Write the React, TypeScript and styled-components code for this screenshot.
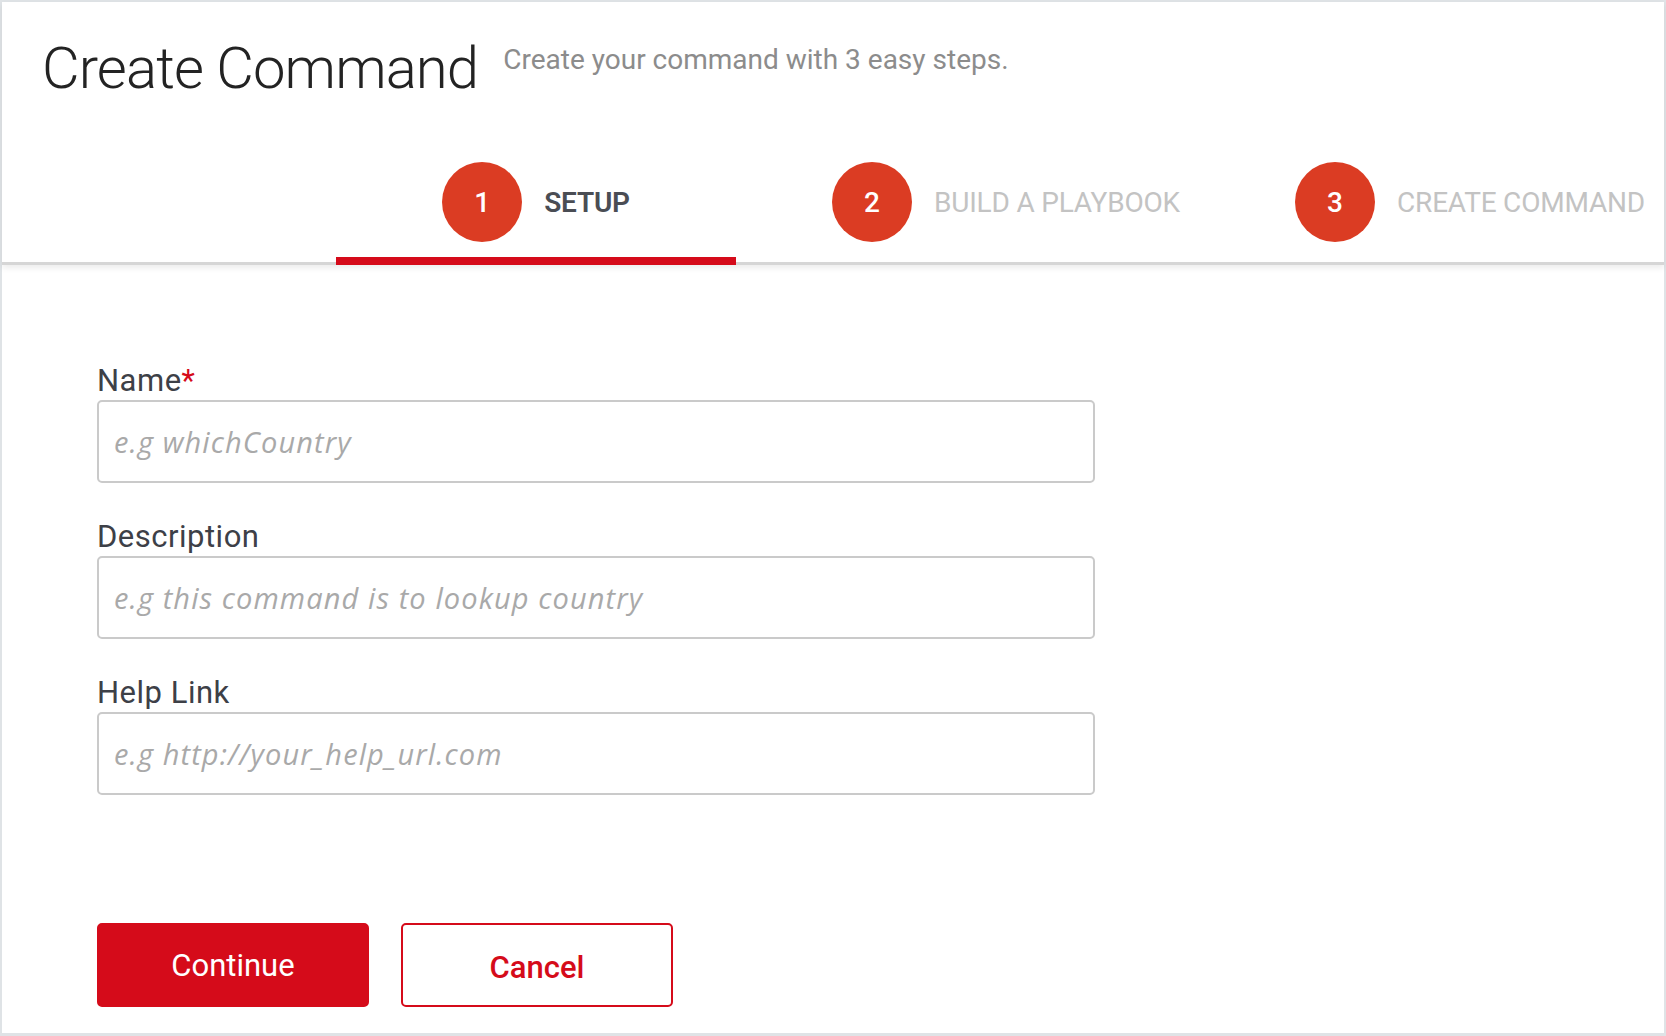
import React from "react";
import styled, { createGlobalStyle } from "styled-components";

const Global = createGlobalStyle`
  html, body { margin: 0; padding: 0; background: #ffffff; }
  body { font-family: Roboto, "Liberation Sans", sans-serif; }
  * { box-sizing: border-box; }
`;

const Card = styled.div`
  width: 1666px;
  height: 1036px;
  border: 2px solid #dfe3e6;
  border-bottom-width: 3px;
  background: #fff;
  display: flex;
  flex-direction: column;
`;

const Header = styled.header`
  padding-top: 37px;
  border-bottom: 3px solid #d6d6d6;
  box-shadow: 0 3px 6px rgba(0, 0, 0, 0.08);
  position: relative;
  z-index: 1;
`;

const TitleRow = styled.div`
  display: flex;
  align-items: flex-start;
  gap: 25px;
  padding-left: 40px;
`;

const Title = styled.h1`
  margin: 0;
  font-size: 58px;
  line-height: 58px;
  font-weight: 300;
  color: #232323;
  letter-spacing: -0.9px;
`;

const Subtitle = styled.p`
  margin: 7px 0 0;
  font-size: 28px;
  line-height: 28px;
  color: #8c8c8c;
`;

const Steps = styled.nav`
  display: grid;
  grid-template-columns: 400px 540px 1fr;
  margin-top: 65px;
  margin-bottom: -3px;
  padding-left: 334px;
`;

const Step = styled.div<{ $active?: boolean }>`
  display: flex;
  align-items: center;
  justify-content: center;
  gap: 22px;
  padding-bottom: 15px;
  border-bottom: 8px solid ${(p) => (p.$active ? "#d50b1a" : "transparent")};
`;

const Circle = styled.span`
  width: 80px;
  height: 80px;
  border-radius: 50%;
  background: #db3c23;
  color: #fff;
  font-size: 28px;
  font-weight: 500;
  display: flex;
  align-items: center;
  justify-content: center;
`;

const StepLabel = styled.span<{ $active?: boolean }>`
  font-size: 28px;
  text-transform: uppercase;
  letter-spacing: -0.2px;
  font-weight: ${(p) => (p.$active ? 600 : 400)};
  color: ${(p) => (p.$active ? "#4a4d54" : "#c3c3c3")};
`;

const Form = styled.form`
  flex: 1;
  display: flex;
  flex-direction: column;
  padding: 98px 0 0 95px;
`;

const Fields = styled.div`
  display: flex;
  flex-direction: column;
  gap: 36px;
`;

const Field = styled.label`
  display: flex;
  flex-direction: column;
  gap: 1px;
`;

const LabelText = styled.span`
  font-size: 31px;
  line-height: 36px;
  letter-spacing: 0.5px;
  color: #3d4047;
`;

const Required = styled.span`
  color: #d50b1a;
`;

const Input = styled.input`
  width: 998px;
  height: 83px;
  border: 2px solid #cacaca;
  border-radius: 5px;
  padding: 0 15px;
  font-family: "Open Sans", Roboto, sans-serif;
  font-size: 29px;
  letter-spacing: 1.1px;
  color: #333;
  outline: none;
  &::placeholder {
    color: #a9a9a9;
    font-style: italic;
  }
`;

const Actions = styled.div`
  display: flex;
  gap: 32px;
  margin-top: 128px;
`;

const Button = styled.button<{ $primary?: boolean }>`
  width: 272px;
  height: 84px;
  border-radius: 5px;
  border: 2px solid #d50b1a;
  background: ${(p) => (p.$primary ? "#d50b1a" : "#fff")};
  color: ${(p) => (p.$primary ? "#fff" : "#d50b1a")};
  font-family: Roboto, "Liberation Sans", sans-serif;
  font-size: 31px;
  font-weight: ${(p) => (p.$primary ? 400 : 500)};
  padding: ${(p) => (p.$primary ? "0" : "4px 0 0")};
  cursor: pointer;
`;

const steps = [
  { n: 1, label: "Setup", active: true },
  { n: 2, label: "Build a Playbook" },
  { n: 3, label: "Create Command" },
];

export default function App() {
  return (
    <>
      <Global />
      <Card>
        <Header>
          <TitleRow>
            <Title>Create Command</Title>
            <Subtitle>Create your command with 3 easy steps.</Subtitle>
          </TitleRow>
          <Steps>
            {steps.map((s) => (
              <Step key={s.n} $active={s.active}>
                <Circle>{s.n}</Circle>
                <StepLabel $active={s.active}>{s.label}</StepLabel>
              </Step>
            ))}
          </Steps>
        </Header>
        <Form onSubmit={(e) => e.preventDefault()}>
          <Fields>
            <Field>
              <LabelText>
                Name<Required>*</Required>
              </LabelText>
              <Input placeholder="e.g whichCountry" />
            </Field>
            <Field>
              <LabelText>Description</LabelText>
              <Input placeholder="e.g this command is to lookup country" />
            </Field>
            <Field>
              <LabelText>Help Link</LabelText>
              <Input placeholder="e.g http://your_help_url.com" />
            </Field>
          </Fields>
          <Actions>
            <Button type="submit" $primary>
              Continue
            </Button>
            <Button type="button">Cancel</Button>
          </Actions>
        </Form>
      </Card>
    </>
  );
}
